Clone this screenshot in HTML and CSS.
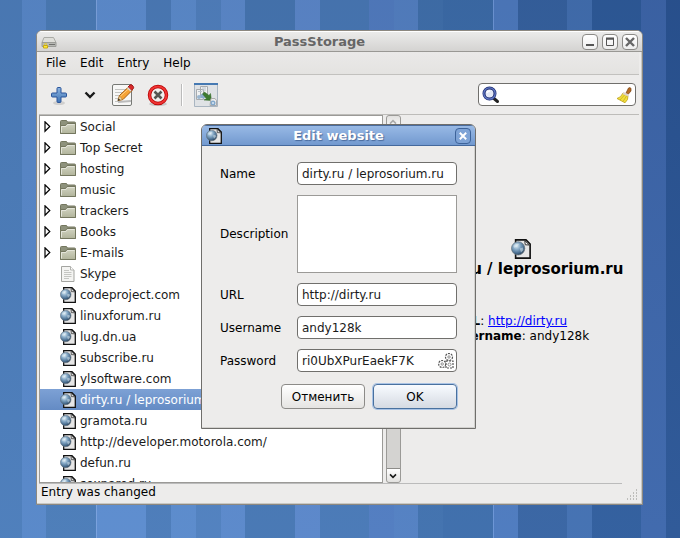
FILE: index.html
```html
<!DOCTYPE html>
<html lang="en">
<head>
<meta charset="utf-8">
<title>PassStorage</title>
<link rel="stylesheet" href="styles.css">
</head>
<body>
<svg class="defs" aria-hidden="true">
  <defs>
    <radialGradient id="ball" cx="38%" cy="32%" r="70%"><stop offset="0" stop-color="#dcebf4"/><stop offset=".4" stop-color="#86a9c6"/><stop offset=".8" stop-color="#45698b"/><stop offset="1" stop-color="#2a4056"/></radialGradient>
    <linearGradient id="tan" x1="0" y1="0" x2="0" y2="1"><stop offset="0" stop-color="#d2d4c2"/><stop offset="1" stop-color="#b1b49b"/></linearGradient>
    <linearGradient id="blue" x1="0" y1="0" x2="0" y2="1"><stop offset="0" stop-color="#8db4df"/><stop offset="1" stop-color="#3f74b5"/></linearGradient>
    <symbol id="site" viewBox="0 0 16 16"><path d="M3.700.7h8.300l3.300 3.300v11.300H3.700z" fill="#e6e6e6" stroke="#111" stroke-width="1.300"/><path d="M11 1.300l.4 3.300 3.300.2z" fill="#fff" stroke="#333" stroke-width=".8"/><circle cx="5.700" cy="7.500" r="5.300" fill="url(#ball)" stroke="#66747f" stroke-width=".6"/><path d="M2 5.500q2-2.500 4.500-1.500L5 6 2.500 7zM7 7.500l2.500-.8.5 2-2 2z" fill="#e4eff5" opacity=".5"/></symbol>
    <symbol id="folder" viewBox="0 0 16 16"><path d="M.5 2.500q0-1 1-1h5l1 1.500h7q1 0 1 1v10.500H.5z" fill="#8e927c" stroke="#74775f"/><path d="M.5 6.500h5l1.500-2h8.500v10H.5z" fill="url(#tan)" stroke="#74775f"/><path d="M1.500 13.500V7.500h4.500l1.500-2h7" fill="none" stroke="#e4e5da"/></symbol>
    <symbol id="page" viewBox="0 0 16 16"><path d="M1.500.5h9l3.500 3.500v11.500h-12.500z" fill="#f4f4f2" stroke="#a4a5a1"/><path d="M10.500.5v3.500h3.500" fill="#fff" stroke="#b2b3af"/><path d="M4 4.500h5M4 6.500h7.500M4 8.500h7.500M4 10.500h7.500M4 12.500h5" stroke="#c5c6c2"/></symbol>
    <symbol id="arrow" viewBox="0 0 8 12"><path d="M2 .8v9.400L6.800 5.500z" fill="#fff" stroke="#000" stroke-width="1.200"/></symbol>
    <symbol id="down" viewBox="0 0 12 8"><path d="M1.500 1.500L6 6l4.500-4.500" fill="none" stroke="currentColor" stroke-width="2.400"/></symbol>
    <symbol id="cross" viewBox="0 0 10 10"><path d="M1 1l8 8M9 1l-8 8" fill="none" stroke="currentColor" stroke-width="2.400"/></symbol>
  </defs>
</svg>

<main class="window">
  <header class="titlebar">
    <svg class="i16" viewBox="0 0 16 16"><path d="M3 3.500h9.500l2.500 5H1z" fill="#deded9" stroke="#aaaba6"/><path d="M1 8.500h14v4H1z" fill="#b8b9b5" stroke="#9c9d98"/><path d="M8 10.500h6" stroke="#6f706d"/><path d="M2.500 11.500h4v2.500h-4z" fill="#ffe83a" stroke="#c9ab10"/><path d="M3.500 11V9.500h2V11" fill="none" stroke="#d9c74c"/></svg>
    <h1>PassStorage</h1>
    <div class="controls">
      <button class="control" aria-label="Minimize"><svg viewBox="0 0 10 10"><path d="M1 8h8" stroke="#555" stroke-width="2"/></svg></button>
      <button class="control" aria-label="Maximize"><svg viewBox="0 0 10 10"><path d="M1.500 2h7v6.500h-7z" fill="none" stroke="#555"/><path d="M1 1.500h8" stroke="#555" stroke-width="2"/></svg></button>
      <button class="control" aria-label="Close"><svg><use href="#cross"/></svg></button>
    </div>
  </header>
  <nav class="menubar"><button>File</button><button>Edit</button><button>Entry</button><button>Help</button></nav>
  <div class="toolbar">
    <button class="tool" aria-label="Add"><svg class="i24" viewBox="0 0 24 24"><ellipse cx="12" cy="20" rx="6" ry="2" fill="#000" opacity=".12"/><path d="M10 5.500q0-1 1-1h2q1 0 1 1V10h4.500q1 0 1 1v2q0 1-1 1H14v4.500q0 1-1 1h-2q-1 0-1-1V14H5.500q-1 0-1-1v-2q0-1 1-1H10z" fill="url(#blue)" stroke="#2b559b"/></svg></button>
    <button class="tool drop" aria-label="Add menu"><svg class="chevron"><use href="#down"/></svg></button>
    <button class="tool" aria-label="Edit"><svg class="i24" viewBox="0 0 24 24"><rect x="1.500" y="1.500" width="19" height="21" rx="1.500" fill="#f7f7f6" stroke="#777975"/><path d="M4 6.500h11M4 9.500h10M4 12.500h6M4 15.500h5M4 18.500h6" stroke="#c3c4c1"/><path d="M7 19l13-1" stroke="#bbb" stroke-width="2"/><path d="M7 17.500l1.500-5L18 3.500l3.500 3.500-9.500 9.500z" fill="#f6a335" stroke="#a65c10"/><path d="M9.500 13L18.500 5" stroke="#ffd18a"/><path d="M7 17.500l1.500-4.500 3 3.500z" fill="#f0d7a7" stroke="#9c7b41" stroke-width=".5"/><path d="M6.700 17.800l1-2.300 1.300 1.500z" fill="#111"/><path d="M17 4l2-2q1-.8 2 0l1.300 1.500q.7 1 0 2l-2 2z" fill="#d92a2a" stroke="#991616"/><path d="M16.500 4.500l3.500 3.500" stroke="#ddd" stroke-width="1.500"/></svg></button>
    <button class="tool" aria-label="Delete"><svg class="i24" viewBox="0 0 24 24"><ellipse cx="12" cy="21" rx="9" ry="2" fill="#000" opacity=".15"/><circle cx="12" cy="12" r="8.500" fill="#f0f0ef" stroke="#b80000" stroke-width="3.500"/><circle cx="12" cy="12" r="8.500" fill="none" stroke="#ef3434" stroke-width="2"/><path d="M8.500 8.500l7 7M15.500 8.500l-7 7" stroke="#555753" stroke-width="2.600"/></svg></button>
    <span class="separator"></span>
    <button class="tool" aria-label="Copy"><svg class="i24" viewBox="0 0 24 24"><path d="M.5.500h23v23H.5z" fill="#dfe2e5" stroke="#a9b5c1"/><path d="M0 1h24" stroke="#4679b2" stroke-width="2"/><path d="M6.500 3.500h7v11h-7zM2.500 6.500h7v10h-7z" fill="#f0f1f1" stroke="#a8abae"/><path d="M8 5h4M8 7h4M4 8.500h4" stroke="#bac4ce"/><circle cx="9" cy="13" r="2.500" fill="#8caccc"/><circle cx="5" cy="14" r="2" fill="#9ab6d0"/><path d="M10.500 9l4.500 3.500 1.500-2 1 7-7.500-.5 2.500-1.500L8.500 11z" fill="#3f7a30" stroke="#2f6622" stroke-width=".5"/><path d="M17 15.500h4l1.500 2v5H16z" fill="#eee" stroke="#aaa"/><circle cx="19" cy="20" r="2.500" fill="#83a9cc"/><circle cx="19" cy="20" r="1" fill="#dce9f4"/></svg></button>
    <div class="search">
      <svg class="i18" viewBox="0 0 18 18"><path d="M12 12.500l3.500 3" stroke="#222" stroke-width="3" stroke-linecap="round"/><circle cx="7.500" cy="7.500" r="5.500" fill="#e3e8f6" stroke="#1d2c70" stroke-width="3"/><circle cx="7.500" cy="7.500" r="5.700" fill="none" stroke="#6279c5" stroke-width="1.300"/><path d="M5 7q.5-2 3-2" fill="none" stroke="#fff" stroke-width="1.500"/></svg>
      <input type="text" aria-label="Search">
      <button class="plain" aria-label="Clear"><svg class="i16" viewBox="0 0 16 16"><path d="M10 6l2.500-5q1.500-1 2.500.5V4l-3 3.500z" fill="#b66b24" stroke="#774011" stroke-width=".7"/><path d="M7 6l5 2.500-.5 4-2.500 3.300L1 11.500q4-1 6-5.500z" fill="#f2df3c" stroke="#bda016" stroke-width=".8"/><path d="M8.500 8L4 13M10.500 9L7 14.500" stroke="#c3a91f" stroke-width=".7"/><path d="M7 6l5.500 2.500" stroke="#ddd0c9" stroke-width="2"/></svg></button>
    </div>
  </div>

  <section class="content">
    <ul class="tree">
      <li><svg class="expander"><use href="#arrow"/></svg><svg class="i16"><use href="#folder"/></svg>Social</li>
      <li><svg class="expander"><use href="#arrow"/></svg><svg class="i16"><use href="#folder"/></svg>Top Secret</li>
      <li><svg class="expander"><use href="#arrow"/></svg><svg class="i16"><use href="#folder"/></svg>hosting</li>
      <li><svg class="expander"><use href="#arrow"/></svg><svg class="i16"><use href="#folder"/></svg>music</li>
      <li><svg class="expander"><use href="#arrow"/></svg><svg class="i16"><use href="#folder"/></svg>trackers</li>
      <li><svg class="expander"><use href="#arrow"/></svg><svg class="i16"><use href="#folder"/></svg>Books</li>
      <li><svg class="expander"><use href="#arrow"/></svg><svg class="i16"><use href="#folder"/></svg>E-mails</li>
      <li class="leaf"><svg class="i16"><use href="#page"/></svg>Skype</li>
      <li class="leaf"><svg class="i16"><use href="#site"/></svg>codeproject.com</li>
      <li class="leaf"><svg class="i16"><use href="#site"/></svg>linuxforum.ru</li>
      <li class="leaf"><svg class="i16"><use href="#site"/></svg>lug.dn.ua</li>
      <li class="leaf"><svg class="i16"><use href="#site"/></svg>subscribe.ru</li>
      <li class="leaf"><svg class="i16"><use href="#site"/></svg>ylsoftware.com</li>
      <li class="leaf selected"><svg class="i16"><use href="#site"/></svg>dirty.ru / leprosorium.ru</li>
      <li class="leaf"><svg class="i16"><use href="#site"/></svg>gramota.ru</li>
      <li class="leaf"><svg class="i16"><use href="#site"/></svg>http://developer.motorola.com/</li>
      <li class="leaf"><svg class="i16"><use href="#site"/></svg>defun.ru</li>
      <li class="leaf"><svg class="i16"><use href="#site"/></svg>sexnarod.ru</li>
    </ul>
    <div class="scrollbar">
      <button class="step up" aria-label="Scroll up"><svg><use href="#down"/></svg></button>
      <button class="step" aria-label="Scroll down"><svg><use href="#down"/></svg></button>
    </div>
    <article class="details">
      <svg class="i20"><use href="#site"/></svg>
      <h2>dirty.ru / leprosorium.ru</h2>
      <p><b>URL</b>: <a href="http://dirty.ru">http://dirty.ru</a><br><b>Username</b>: andy128k</p>
    </article>
  </section>
  <footer class="status"><span>Entry was changed</span>
    <svg class="grip" viewBox="0 0 12 12"><path d="M10 1h1M7 4h1M10 4h1M4 7h1M7 7h1M10 7h1M1 10h1M4 10h1M7 10h1M10 10h1" stroke="#8d8d89" stroke-width="1.200"/></svg>
  </footer>
</main>

<form class="dialog" role="dialog" aria-labelledby="dialog-title">
  <header class="titlebar active">
    <svg class="i16"><use href="#site"/></svg>
    <h1 id="dialog-title">Edit website</h1>
    <button type="button" class="control" aria-label="Close"><svg><use href="#cross"/></svg></button>
  </header>
  <div class="fields">
    <label for="name">Name</label>
    <div class="field"><input id="name" type="text" value="dirty.ru / leprosorium.ru"></div>
    <label for="description">Description</label>
    <textarea id="description"></textarea>
    <label for="url">URL</label>
    <div class="field"><input id="url" type="text" value="http://dirty.ru"></div>
    <label for="username">Username</label>
    <div class="field"><input id="username" type="text" value="andy128k"></div>
    <label for="password">Password</label>
    <div class="field"><input id="password" type="text" value="ri0UbXPurEaekF7K"><button type="button" class="plain" aria-label="Generate"><svg class="i16" viewBox="0 0 16 16"><g fill="#fff" stroke="#555" stroke-width="1.200" stroke-dasharray="2 1"><circle cx="11" cy="4" r="3.500"/><circle cx="4.200" cy="11" r="3.500"/><rect x="8" y="8" width="7" height="7"/></g><g fill="#fff" stroke="#777" stroke-width=".8"><circle cx="11" cy="4" r="1.200"/><circle cx="4.200" cy="11" r="1.200"/><circle cx="11.500" cy="11.500" r="1.500"/></g></svg></button></div>
  </div>
  <div class="actions"><button type="button">Отменить</button><button type="button" class="default">OK</button></div>
</form>
</body>
</html>
```
FILE: styles.css
```css
* { box-sizing: border-box; }

body {
  margin: 0;
  height: 100vh;
  padding: 30px 37px 33px 36px;
  display: flex;
  position: relative;
  overflow: hidden;
  font: 12px/16px "DejaVu Sans", sans-serif;
  color: #1a1a1a;
  background:
    linear-gradient(rgba(0, 20, 60, .03), rgba(120, 180, 255, .1)),
    linear-gradient(90deg,
      #4b7ab5 0 22px, #5785c4 22px 46px, #4a79b2 46px 96px,
      #7ba0da 96px 97px, #5c8aca 97px 146px, #4a78b3 146px 171px,
      #5a88c7 171px 196px, #4f7db9 196px 221px, #5a86c6 221px 245px,
      #4573ad 245px 295px, #5a84c5 295px 320px, #4775b0 320px 369px,
      #5079bb 369px 394px, #527dbd 394px 418px, #3f6da7 418px 443px,
      #3b69a4 443px 493px, #6c93d2 493px 494px, #4c77b9 494px 518px,
      #355f9b 518px 567px, #416cab 567px 592px, #2d5895 592px 641px,
      #3c63a5 641px 666px, #29518e 666px 100%);
}

button, input, textarea { font: inherit; color: inherit; }
button { padding: 0; }
h1, h2, p, ul { margin: 0; padding: 0; }
svg { display: block; flex: none; }
.defs { position: absolute; width: 0; height: 0; }
.i16 { width: 16px; height: 16px; }
.i18 { width: 18px; height: 18px; }
.i20 { width: 20px; height: 20px; }
.i24 { width: 24px; height: 24px; }
.plain { border: 0; background: none; }

.window {
  flex: 1;
  min-width: 0;
  display: flex;
  flex-direction: column;
  border: 1px solid #8c8880;
  border-radius: 6px 6px 0 0;
  background: #edeceb;
  box-shadow: inset -1px -1px #c9c8c4;
  overflow: hidden;
}

.titlebar {
  display: flex;
  align-items: center;
  flex: none;
  height: 21px;
  padding: 0 4px;
  border-top: 1px solid #fff;
  border-bottom: 1px solid #999894;
  background: linear-gradient(#ebebea, #d4d3d1);
}
.titlebar h1 {
  flex: 1;
  text-align: center;
  font-size: 13px;
  line-height: 16px;
  color: #666;
}
.controls { display: flex; gap: 4px; }
.control {
  width: 16px;
  height: 16px;
  display: grid;
  place-items: center;
  border: 1px solid #8b8a87;
  border-radius: 4px;
  background: linear-gradient(#fff, #eee);
  color: #666;
}
.control svg { width: 10px; height: 10px; }

.menubar {
  display: flex;
  flex: none;
  gap: 14px;
  height: 23px;
  margin: 0 3px 0 2px;
  padding: 0 7px;
  border-bottom: 1px solid #c2c1be;
  background: linear-gradient(#eae9e8, #e4e3e1);
}
.menubar button { border: 0; background: none; color: #000; }

.toolbar {
  display: flex;
  align-items: center;
  flex: none;
  height: 40px;
  margin: 0 3px 0 2px;
  padding: 0 3px 0 8px;
  border-bottom: 1px solid #bdbcb9;
}
.tool { border: 0; background: none; }
.drop { width: 24px; margin: 0 9px 0 7px; display: grid; place-items: center; }
.tool + .tool:nth-child(4) { margin-left: 11px; }
.chevron { width: 12px; height: 8px; }
.separator { height: 22px; border-left: 1px solid #bbb; border-right: 1px solid #fff; margin: 0 11px 0 11px; }
.search {
  display: flex;
  align-items: center;
  width: 158px;
  height: 23px;
  margin-left: auto;
  padding: 0 3px;
  border: 1px solid #706f6c;
  border-radius: 4px;
  background: #fff;
}
.search input { flex: 1; min-width: 0; border: 0; background: none; }

.content { flex: 1; min-height: 0; display: flex; padding-left: 2px; }
.tree {
  flex: 0 0 57%;
  list-style: none;
  border: 1px solid #9b9a97;
  background: #fff;
  overflow: hidden;
}
.tree li {
  display: flex;
  align-items: center;
  gap: 4px;
  height: 21px;
  padding-left: 3px;
  white-space: nowrap;
}
.tree .leaf { padding-left: 20px; }
.tree .selected { color: #fff; background: linear-gradient(#7da1d5, #648bc4); }
.expander { width: 8px; height: 12px; margin-right: 5px; }

.scrollbar {
  display: flex;
  flex-direction: column;
  justify-content: space-between;
  width: 15px;
  margin-left: 3px;
  border: 1px solid #9b9a97;
  border-radius: 3px;
  background: #d4d3d1;
}
.step {
  display: grid;
  place-items: center;
  height: 14px;
  border: 0;
  border-top: 1px solid #8d8c89;
  border-radius: 0 0 3px 3px;
  background: linear-gradient(#fff, #e2e1df);
}
.step svg { width: 8px; height: 6px; }
.up { transform: rotate(180deg); color: #aaa; }

.details {
  flex: 1;
  display: flex;
  flex-direction: column;
  align-items: center;
  padding-top: 124px;
  color: #000;
}
.details h2 { font-size: 15px; line-height: 20px; white-space: nowrap; }
.details p { margin-top: 35px; line-height: 15px; }
.details a { color: #00f; }

.status {
  display: flex;
  justify-content: space-between;
  flex: none;
  height: 21px;
  padding: 1px 4px 0;
  color: #000;
  background: linear-gradient(#bbb, #bbb) 2px 0 / calc(100% - 22px) 1px no-repeat;
}
.grip { width: 12px; height: 12px; align-self: end; margin-bottom: 3px; }

.dialog {
  position: absolute;
  left: 201px;
  top: 124px;
  width: 275px;
  border: 1px solid #6f6e6b;
  border-radius: 6px 6px 0 0;
  background: #edeceb;
  overflow: hidden;
  box-shadow: inset -1px -1px #d2d1ce;
}
.active {
  border-top-color: #4a6c9d;
  border-bottom-color: #44699d;
  background: linear-gradient(#98b9e5, #7299cf);
}
.active h1 { color: #fff; text-shadow: 1px 1px 1px #48699b; }
.active .control { background: #7ea3d6; border-color: #3d639a; color: #fff; }
.active .control svg { width: 8px; height: 8px; }

.fields {
  display: grid;
  grid-template-columns: 69px minmax(0, 1fr);
  align-items: center;
  gap: 10px 8px;
  padding: 16px 18px 0;
  color: #000;
}
.field {
  display: flex;
  align-items: center;
  height: 23px;
  padding: 0 2px 0 4px;
  border: 1px solid #706f6c;
  border-radius: 4px;
  background: #fff;
  color: #1a1a1a;
}
.field input { flex: 1; min-width: 0; padding: 0; border: 0; background: none; }
.fields textarea {
  width: 100%;
  height: 78px;
  margin: 0;
  border: 1px solid #9b9a97;
  background: #fff;
  resize: none;
}
.actions {
  display: flex;
  justify-content: flex-end;
  gap: 8px;
  padding: 12px 18px 19px;
}
.actions button {
  width: 84px;
  height: 25px;
  border: 1px solid #8c8b88;
  border-radius: 4px;
  background: linear-gradient(#fff, #e5e4e2);
  color: #000;
}
.actions .default {
  border-color: #49719f;
  background: linear-gradient(#f8fbff, #d5dae2);
  box-shadow: 0 0 0 1px #a9c3e5;
}
```
